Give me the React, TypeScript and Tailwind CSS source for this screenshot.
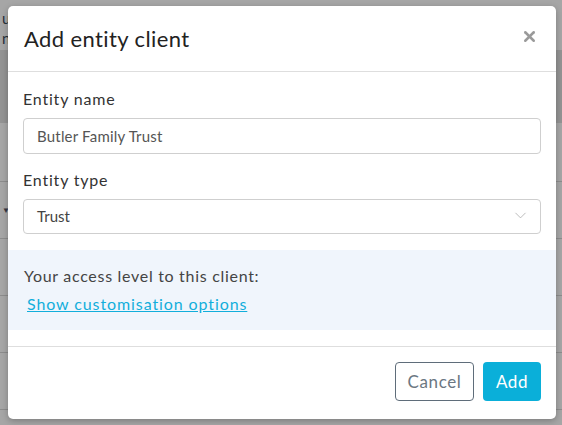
import React from 'react';
import { ChevronDown, X } from 'lucide-react';

export default function App() {
  const rows = [0, 1, 2, 3, 4];

  return (
    <div
      className="relative w-[562px] h-[425px] overflow-hidden bg-white"
      style={{ fontFamily: 'Lato, "Noto Sans", sans-serif' }}
    >
      {/* Page behind the dialog */}
      <div className="flex flex-col">
        <div className="h-[50px] px-[2px] pt-[8px] text-[15px] leading-[20px] text-[#3b4a5a]">
          <div>u</div>
          <div>n</div>
        </div>
        <div className="h-[73px] bg-[#e2e2e2]" />
        <div className="h-[58px]" />
        {rows.map((r) => (
          <div key={r} className="h-[57px] border-t border-[#d8d8d8] flex items-center px-[2px]">
            {r === 0 && <span className="text-[8px] text-[#556]">▼</span>}
          </div>
        ))}
      </div>

      {/* Overlay */}
      <div className="absolute inset-0 bg-black/35" />

      {/* Dialog */}
      <div className="absolute left-[8px] top-[6px] w-[548px] h-[413px] bg-white rounded-[5px] shadow-[0_2px_6px_rgba(0,0,0,0.25)] flex flex-col">
        <div className="h-[66px] flex items-center justify-between pl-[16px] pr-[18px] border-b border-[#dedede]">
          <h2 className="text-[22px] text-[#222] tracking-[0.4px]">Add entity client</h2>
          <X size={17} strokeWidth={3.5} className="text-[#9a9a9a] -mt-[5px]" />
        </div>

        <div className="px-[15px] pt-[17px] flex flex-col">
          <label className="text-[16px] text-[#333] leading-[20px] tracking-[0.8px] mb-[9px]">Entity name</label>
          <div className="h-[36px] border border-[#cfcfcf] rounded-[4px] flex items-center px-[13px] text-[15px] tracking-[0.2px] text-[#555]">
            Butler Family Trust
          </div>

          <label className="text-[16px] text-[#333] leading-[20px] tracking-[0.8px] mt-[16px] mb-[9px]">Entity type</label>
          <div className="h-[35px] border border-[#cfcfcf] rounded-[4px] flex items-center justify-between pl-[13px] pr-[10px] text-[15px] text-[#444]">
            <span>Trust</span>
            <ChevronDown size={19} strokeWidth={1} className="text-[#aaa] -mt-[2px]" />
          </div>
        </div>

        <div className="mt-[16px] h-[80px] bg-[#f0f5fc] px-[16px] pt-[16px] flex flex-col">
          <p className="text-[16px] text-[#444] leading-[20px] tracking-[0.7px]">Your access level to this client:</p>
          <a className="mt-[8px] ml-[3px] text-[16px] leading-[20px] tracking-[0.9px] text-[#12aedb] underline">
            Show customisation options
          </a>
        </div>

        <div className="mt-[16px] border-t border-[#dedede] flex-1 flex items-start justify-end gap-[9px] pr-[15px] pt-[15px]">
          <button className="h-[39px] w-[79px] border border-[#5f6d7a] rounded-[4px] text-[17px] tracking-[0.6px] text-[#6b7782] bg-white">
            Cancel
          </button>
          <button className="h-[39px] w-[58px] rounded-[4px] text-[17px] tracking-[0.6px] text-white bg-[#0aafd9]">
            Add
          </button>
        </div>
      </div>
    </div>
  );
}
